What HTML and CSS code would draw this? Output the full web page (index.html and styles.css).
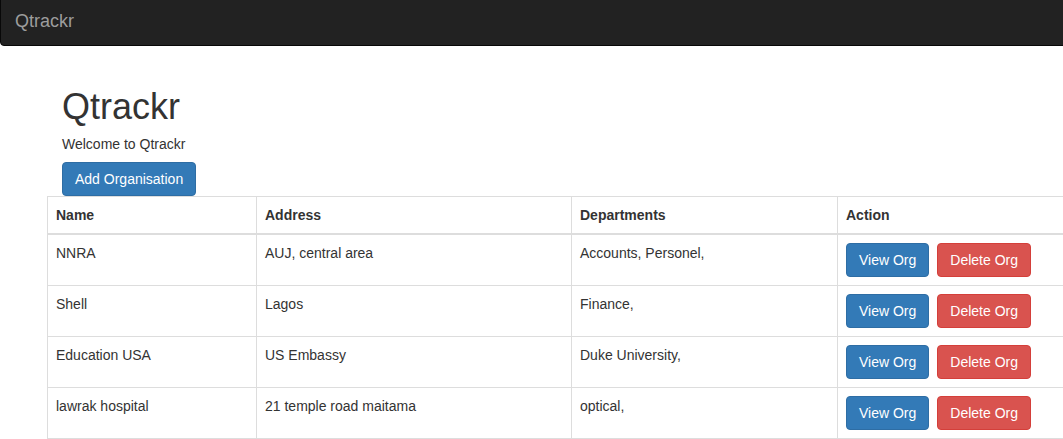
FILE: index.html
```html
<!DOCTYPE html>
<html>
<head>
<meta charset="utf-8">
<title>Qtrackr</title>
<link rel="stylesheet" href="styles.css">
</head>
<body>
<nav class="navbar"><span class="brand">Qtrackr</span></nav>
<div class="intro">
  <h1 class="title">Qtrackr</h1>
  <p class="welcome">Welcome to Qtrackr</p>
  <button class="btn btn-primary btn-add">Add Organisation</button>
</div>
<div class="table-wrap">
<table class="orgs">
  <colgroup>
    <col class="c1"><col class="c2"><col class="c3"><col class="c4">
  </colgroup>
  <thead>
    <tr><th>Name</th><th>Address</th><th>Departments</th><th>Action</th></tr>
  </thead>
  <tbody>
    <tr><td>NNRA</td><td>AUJ, central area</td><td>Accounts, Personel,</td><td class="actions"><button class="btn btn-primary">View Org</button><button class="btn btn-danger">Delete Org</button></td></tr>
    <tr><td>Shell</td><td>Lagos</td><td>Finance,</td><td class="actions"><button class="btn btn-primary">View Org</button><button class="btn btn-danger">Delete Org</button></td></tr>
    <tr><td>Education USA</td><td>US Embassy</td><td>Duke University,</td><td class="actions"><button class="btn btn-primary">View Org</button><button class="btn btn-danger">Delete Org</button></td></tr>
    <tr><td>lawrak hospital</td><td>21 temple road maitama</td><td>optical,</td><td class="actions"><button class="btn btn-primary">View Org</button><button class="btn btn-danger">Delete Org</button></td></tr>
  </tbody>
</table>
</div>
</body>
</html>
```
FILE: styles.css
```css
html, body {
  margin: 0;
  padding: 0;
  overflow: hidden;
  background: #fff;
}
body {
  font-family: "Liberation Sans", Arial, sans-serif;
  font-size: 14px;
  line-height: 20px;
  color: #333;
}
.navbar {
  box-sizing: border-box;
  width: 1100px;
  height: 50px;
  margin-top: -4px;
  background: #222;
  border: 1px solid #080808;
  border-radius: 4px;
  display: flex;
  align-items: flex-start;
}
.brand {
  padding: 14px 14px;
  font-size: 18px;
  line-height: 20px;
  color: #9d9d9d;
}
.intro {
  padding: 41px 0 0 62px;
}
.title {
  margin: 0;
  font-size: 36px;
  line-height: 40px;
  font-weight: 500;
  color: #333;
}
.welcome {
  margin: 7px 0 8px;
}
.btn {
  box-sizing: border-box;
  display: inline-block;
  height: 34px;
  padding: 6px 12px;
  font-family: inherit;
  font-size: 14px;
  line-height: 20px;
  border: 1px solid transparent;
  border-radius: 4px;
  color: #fff;
  cursor: pointer;
}
.btn-primary {
  background: #337ab7;
  border-color: #2e6da4;
}
.btn-danger {
  background: #d9534f;
  border-color: #d43f3a;
}
.btn-add {
  display: block;
}
.table-wrap {
  padding-left: 47px;
}
.orgs {
  width: 1080px;
  border-collapse: collapse;
  border: 1px solid #ddd;
  table-layout: fixed;
}
.c1 { width: 209px; }
.c2 { width: 315px; }
.c3 { width: 266px; }
.orgs th, .orgs td {
  padding: 8px;
  text-align: left;
  vertical-align: top;
  border: 1px solid #ddd;
  line-height: 20px;
}
.orgs th {
  font-weight: bold;
  border-bottom: 2px solid #ddd;
}
.actions .btn + .btn {
  margin-left: 8px;
}
```
